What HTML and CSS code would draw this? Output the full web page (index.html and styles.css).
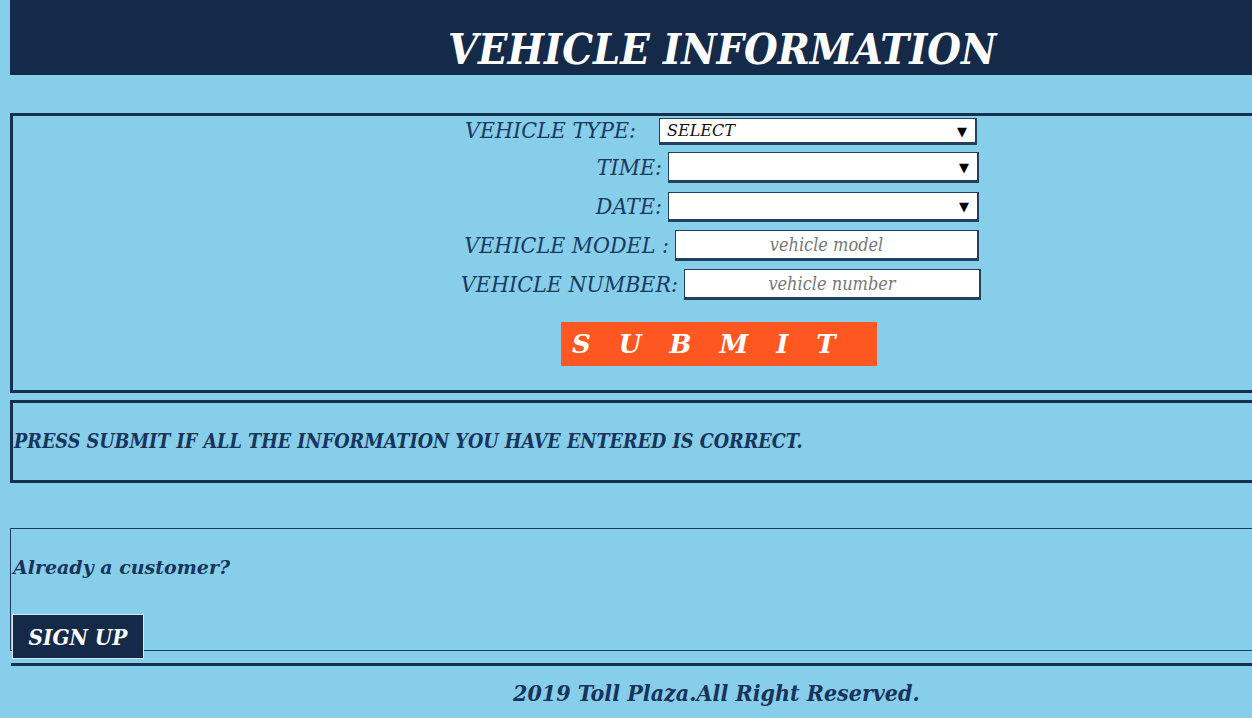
FILE: index.html
```html
<!DOCTYPE html>
<html>
<head>
<meta charset="utf-8">
<link rel="stylesheet" href="styles.css">
</head>
<body>
<header class="top">
  <h1 class="title">VEHICLE INFORMATION</h1>
</header>

<section class="form-box">
  <div class="field f-type">
    <label class="lbl">VEHICLE TYPE:</label>
    <div class="sel w-type">SELECT<span class="arrow">▼</span></div>
  </div>
  <div class="field f-time">
    <label class="lbl">TIME:</label>
    <div class="sel w-time"><span class="arrow">▼</span></div>
  </div>
  <div class="field f-date">
    <label class="lbl">DATE:</label>
    <div class="sel w-date"><span class="arrow">▼</span></div>
  </div>
  <div class="field f-model">
    <label class="lbl">VEHICLE MODEL :</label>
    <input class="inp w-model" type="text" placeholder="vehicle model">
  </div>
  <div class="field f-number">
    <label class="lbl">VEHICLE NUMBER:</label>
    <input class="inp w-number" type="text" placeholder="vehicle number">
  </div>
  <div class="submit-row">
    <button class="submit">SUBMIT</button>
  </div>
</section>

<section class="msg-box">
  <p class="msg">PRESS SUBMIT IF ALL THE INFORMATION YOU HAVE ENTERED IS CORRECT.</p>
</section>

<section class="cust-box">
  <p class="cust">Already a customer?</p>
  <button class="signup">SIGN UP</button>
</section>

<hr class="rule">

<footer class="foot">2019 Toll Plaza.All Right Reserved.</footer>
</body>
</html>
```

FILE: styles.css
```css
html, body {
  margin: 0;
  padding: 0;
}
body {
  background: #87ceeb;
  padding-left: 10px;
  font-family: "DejaVu Serif", "Liberation Serif", serif;
  font-style: italic;
  color: #17345a;
  overflow-x: hidden;
}
.top {
  background: #152a48;
  height: 75px;
  box-sizing: border-box;
  display: flex;
  align-items: center;
  padding-left: 438px;
  padding-top: 22px;
}
.title {
  margin: 0;
  color: #ffffff;
  font-size: 43px;
  font-weight: bold;
  font-stretch: condensed;
}
.form-box {
  margin-top: 38px;
  border: 3px solid #14304f;
  border-right: none;
  height: 272px;
  padding-top: 2px;
  box-sizing: content-box;
}
.field {
  width: 966px;
  display: flex;
  justify-content: flex-end;
  align-items: center;
  gap: 6px;
}
.lbl {
  font-size: 23px;
  font-stretch: condensed;
  color: #1a3a60;
  white-space: nowrap;
}
.sel, .inp {
  background: #fff;
  border: 1px solid #23405f;
  border-right-width: 2px;
  border-bottom-width: 3px;
  box-sizing: border-box;
  position: relative;
}
.sel {
  font-size: 16px;
  color: #111;
  padding-left: 7px;
  display: flex;
  align-items: center;
}
.arrow {
  position: absolute;
  right: 8px;
  top: 50%;
  transform: translateY(-50%);
  font-size: 13px;
  font-style: normal;
  color: #000;
}
.f-type { height: 27px; gap: 23px; width: 964px; }
.f-type .lbl { margin-top: -4px; }
.w-type { width: 318px; height: 27px; }
.f-time { margin-top: 7px; height: 31px; }
.w-time { width: 311px; height: 31px; }
.f-date { margin-top: 9px; height: 30px; }
.w-date { width: 311px; height: 30px; }
.f-model { margin-top: 8px; height: 31px; }
.w-model { width: 304px; height: 31px; }
.f-number { margin-top: 8px; height: 31px; width: 968px; }
.w-number { width: 297px; height: 31px; }
.f-time .lbl, .f-date .lbl, .f-model .lbl, .f-number .lbl { margin-top: -2px; }
.inp {
  font-family: inherit;
  font-style: italic;
  font-size: 18px;
  text-align: center;
  padding: 0;
  outline: none;
}
.inp::placeholder {
  color: #777;
  font-stretch: condensed;
}
.submit-row {
  margin-top: 22px;
  padding-left: 548px;
}
.submit {
  width: 316px;
  height: 44px;
  background: #ff5722;
  border: none;
  color: #fff;
  font-family: inherit;
  font-style: italic;
  font-weight: bold;
  font-size: 26px;
  letter-spacing: 28px;
  text-align: left;
  padding: 0 0 0 11px;
}
.msg-box {
  margin-top: 7px;
  border: 3px solid #14304f;
  border-right: none;
  height: 77px;
  display: flex;
  align-items: center;
  box-sizing: content-box;
}
.msg {
  margin: 0;
  padding-left: 1px;
  font-weight: bold;
  font-size: 19.6px;
  font-stretch: condensed;
  color: #17345a;
}
.cust-box {
  margin-top: 45px;
  border: 1.5px solid #1c3d62;
  border-right: none;
  height: 123px;
  box-sizing: border-box;
  position: relative;
}
.cust {
  margin: 27px 0 0 2px;
  font-size: 19px;
  font-weight: bold;
  color: #17345a;
}
.signup {
  position: absolute;
  left: 1px;
  bottom: -9px;
  width: 132px;
  height: 45px;
  background: #152a48;
  border: 1.5px solid #d8e6ee;
  color: #fff;
  font-family: inherit;
  font-style: italic;
  font-weight: bold;
  font-size: 22.3px;
  font-stretch: condensed;
  padding: 0;
}
.rule {
  margin: 12px 0 0 1px;
  border: none;
  height: 3px;
  background: #14304f;
}
.foot {
  text-align: left;
  padding-left: 503px;
  margin-top: 13px;
  font-size: 23px;
  font-weight: bold;
  font-stretch: condensed;
  color: #17345a;
}
```
